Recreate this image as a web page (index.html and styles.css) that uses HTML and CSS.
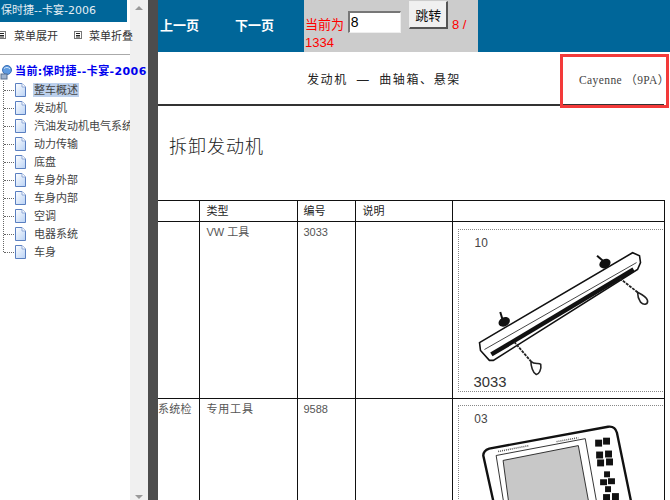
FILE: index.html
```html
<!DOCTYPE html>
<html lang="zh-CN">

<head>
  <meta charset="utf-8">
  <title>保时捷--卡宴-2006</title>
  <link rel="stylesheet" href="styles.css">
</head>

<body>
  <svg class="defs" width="0" height="0">
    <defs>
      <linearGradient id="docFill" x1="0" y1="0" x2="1" y2="1">
        <stop offset="0" stop-color="#ffffff" />
        <stop offset="1" stop-color="#b9d2f5" />
      </linearGradient>
      <symbol id="doc" viewBox="0 0 12 14">
        <path d="M1.5 .5H8L11.5 4V13.5H1.5Z" fill="url(#docFill)" stroke="#5a7fc0" />
        <path d="M8 .5V4H11.5" fill="#fff" stroke="#8fa9d8" />
      </symbol>
      <symbol id="menuIcon" viewBox="0 0 8 8">
        <rect x=".5" y=".5" width="7" height="7" fill="#fff" stroke="#777" />
        <path d="M2 2.5H6M2 4.5H6M2 6H6" stroke="#222" />
      </symbol>
    </defs>
  </svg>

  <div class="page">
    <div class="side">
      <div class="side-title">保时捷--卡宴-2006</div>
      <div class="menu-bar">
        <span class="menu-item"><svg class="menu-icon"><use href="#menuIcon" /></svg>菜单展开</span>
        <span class="menu-item"><svg class="menu-icon"><use href="#menuIcon" /></svg>菜单折叠</span>
      </div>
      <div class="tree-root">
        <svg class="root-icon" viewBox="0 0 12 15">
          <circle cx="7" cy="5" r="4.5" fill="#5f9be0" stroke="#3b6fb5" />
          <path d="M4 3.5C6 2 8 2 10 4" stroke="#d5e8fb" fill="none" />
          <rect x="1" y="9" width="6" height="5" fill="#9fb4cf" stroke="#58708f" />
        </svg>
        <span>当前:保时捷--卡宴-2006</span>
      </div>
      <ul class="tree">
        <li class="tree-row"><i class="dash"></i><svg class="doc"><use href="#doc" /></svg><span class="tree-label on">整车概述</span></li>
        <li class="tree-row"><i class="dash"></i><svg class="doc"><use href="#doc" /></svg><span class="tree-label">发动机</span></li>
        <li class="tree-row"><i class="dash"></i><svg class="doc"><use href="#doc" /></svg><span class="tree-label">汽油发动机电气系统</span></li>
        <li class="tree-row"><i class="dash"></i><svg class="doc"><use href="#doc" /></svg><span class="tree-label">动力传输</span></li>
        <li class="tree-row"><i class="dash"></i><svg class="doc"><use href="#doc" /></svg><span class="tree-label">底盘</span></li>
        <li class="tree-row"><i class="dash"></i><svg class="doc"><use href="#doc" /></svg><span class="tree-label">车身外部</span></li>
        <li class="tree-row"><i class="dash"></i><svg class="doc"><use href="#doc" /></svg><span class="tree-label">车身内部</span></li>
        <li class="tree-row"><i class="dash"></i><svg class="doc"><use href="#doc" /></svg><span class="tree-label">空调</span></li>
        <li class="tree-row"><i class="dash"></i><svg class="doc"><use href="#doc" /></svg><span class="tree-label">电器系统</span></li>
        <li class="tree-row"><i class="dash"></i><svg class="doc"><use href="#doc" /></svg><span class="tree-label">车身</span></li>
      </ul>
    </div>

    <div class="scrollbar">
      <i class="arrow-up"></i>
      <i class="arrow-down"></i>
    </div>
    <div class="divider"></div>

    <div class="main">
      <div class="nav">
        <a class="nav-link">上一页</a>
        <a class="nav-link">下一页</a>
        <div class="jump">
          <span>当前为</span>
          <input class="jump-input" type="text" value="8">
          <button class="jump-btn">跳转</button>
          <span>8 / 1334</span>
        </div>
      </div>

      <div class="doc-head">
        <span class="doc-section">发动机 — 曲轴箱、悬架</span>
        <span class="doc-model">Cayenne （9PA）</span>
      </div>
      <div class="red-mark"></div>

      <h1 class="doc-title">拆卸发动机</h1>

      <table class="parts">
        <colgroup>
          <col class="c-name">
          <col class="c-type">
          <col class="c-no">
          <col class="c-note">
          <col class="c-pic">
        </colgroup>
        <tr class="head-row">
          <th></th>
          <th>类型</th>
          <th>编号</th>
          <th>说明</th>
          <th></th>
        </tr>
        <tr class="row-one">
          <td></td>
          <td>VW 工具</td>
          <td>3033</td>
          <td></td>
          <td class="pic-cell">
            <svg class="pic pic-one" viewBox="0 0 205 163">
              <text x="15" y="17" class="pic-no">10</text>
              <path d="M41 83L44 93" stroke="#111" stroke-width="2" />
              <path d="M139 26L147 33" stroke="#111" stroke-width="2" />
              <ellipse cx="45" cy="93" rx="6" ry="4.5" fill="#111" transform="rotate(-28 45 93)" />
              <ellipse cx="147" cy="34" rx="6" ry="4.5" fill="#111" transform="rotate(-28 147 34)" />
              <path d="M20 114L175 23L182 26L183 33L180 40L34 132L30 132L21 122Z" fill="#fff" stroke="#111" stroke-width="1.6" />
              <path d="M25 121L179 33" stroke="#444" stroke-width="1" />
              <path d="M32 126L176 40" stroke="#111" stroke-width="4.5" />
              <path d="M55 113L72 133" stroke="#222" stroke-width="1.8" stroke-dasharray="3 1" />
              <path d="M72 133C76 137 80 134 82 136C83 141 80 147 77 146C74 144 72 138 72 133Z" fill="none" stroke="#222" stroke-width="1.6" />
              <path d="M162 49L180 63" stroke="#222" stroke-width="1.8" stroke-dasharray="3 1" />
              <path d="M180 63C184 65 189 68 190 71C191 75 187 77 183 73C181 70 180 66 180 63Z" fill="none" stroke="#222" stroke-width="1.6" />
              <text x="14" y="159" class="pic-code">3033</text>
            </svg>
          </td>
        </tr>
        <tr class="row-two">
          <td class="name-cut">系统检</td>
          <td>专用工具</td>
          <td>9588</td>
          <td></td>
          <td class="pic-cell">
            <svg class="pic pic-two" viewBox="0 0 205 100">
              <text x="15" y="17" class="pic-no">03</text>
              <path d="M24 50Q24 45 30 43L150 21Q157 20 159 27L174 100H35Z" fill="#fff" stroke="#111" stroke-width="2.4" />
              <path d="M37 50L127 33L139 100H45Z" fill="#fff" stroke="#333" />
              <path d="M44 55L120 40L131 100H50Z" fill="#c8c8c8" stroke="#333" />
              <path d="M39 46L70 40M98 36L120 32" stroke="#555" stroke-width="1.5" stroke-dasharray="1 1" />
              <g fill="#111">
                <rect x="137" y="34" width="7" height="7" /><rect x="145" y="32" width="7" height="7" />
                <rect x="138" y="46" width="7" height="7" /><rect x="147" y="45" width="7" height="7" />
                <rect x="139" y="54" width="7" height="7" /><rect x="148" y="53" width="7" height="7" />
                <rect x="146" y="66" width="6" height="6" /><rect x="142" y="74" width="7" height="6" /><rect x="150" y="73" width="7" height="6" />
                <rect x="147" y="81" width="6" height="6" /><rect x="145" y="89" width="7" height="7" /><rect x="154" y="88" width="7" height="7" />
              </g>
            </svg>
          </td>
        </tr>
      </table>
    </div>
  </div>
</body>

</html>
```

FILE: styles.css
```css
html, body {
  margin: 0;
  padding: 0;
  height: 500px;
  overflow: hidden;
  background: #fff;
}

.defs {
  display: block;
  height: 0;
}

.page {
  display: flex;
  height: 500px;
  overflow: hidden;
  font-family: "Liberation Sans", "Noto Sans CJK SC", sans-serif;
}

/* left tree */
.side {
  width: 130px;
  flex: none;
  position: relative;
  z-index: 1;
}

.side-title {
  width: 127px;
  height: 22px;
  padding-left: 1px;
  box-sizing: border-box;
  background: #006699;
  color: #e4eef4;
  font: 11px/22px "DejaVu Sans", "Noto Sans CJK SC", sans-serif;
}

.menu-bar {
  display: flex;
  height: 33px;
  box-sizing: border-box;
  padding-bottom: 6px;
  align-items: center;
  border-bottom: 1px solid #aaa;
  font-size: 11px;
  color: #333;
}

.menu-item {
  display: flex;
  align-items: center;
  flex: none;
  width: 73px;
  white-space: nowrap;
}

.menu-item:first-child {
  width: 74px;
}

.menu-icon {
  width: 8px;
  height: 8px;
  margin-right: 7px;
}

.menu-item:first-child .menu-icon {
  margin-left: -2px;
  margin-right: 8px;
}

.tree-root {
  display: flex;
  align-items: center;
  height: 18px;
  margin-top: 8px;
  color: #0000ee;
  font: bold 11px/18px "DejaVu Sans", "Noto Sans CJK SC", sans-serif;
  letter-spacing: .4px;
  white-space: nowrap;
}

.root-icon {
  width: 12px;
  height: 15px;
  margin-right: 3px;
  flex: none;
}

.tree {
  list-style: none;
  margin: 0 0 0 3px;
  padding: 0;
  height: 171px;
  border-left: 1px dotted #666;
}

.tree-row {
  display: flex;
  align-items: center;
  height: 18px;
  width: 126px;
  overflow: hidden;
  font-size: 11px;
  color: #444;
  white-space: nowrap;
}

.dash {
  width: 10px;
  flex: none;
  border-top: 1px dotted #666;
}

.doc {
  width: 12px;
  height: 14px;
  flex: none;
  margin-right: 8px;
}

.tree-label {
  line-height: 14px;
  padding: 0 1px;
  margin-left: -1px;
}

.tree-label.on {
  background: #bcd0ec;
}

/* scrollbar and splitter */
.scrollbar {
  width: 18px;
  flex: none;
  background: #f0f0f0;
  display: flex;
  flex-direction: column;
  justify-content: space-between;
  align-items: center;
  padding: 6px 0 1px;
  box-sizing: border-box;
}

.arrow-up {
  border: 4px solid transparent;
  border-top: 0;
  border-bottom: 4px solid #9a9a9a;
}

.arrow-down {
  border: 4px solid transparent;
  border-bottom: 0;
  border-top: 4px solid #9a9a9a;
}

.divider {
  width: 10px;
  flex: none;
  background: #4d4d4d;
}

/* main */
.main {
  flex: 1;
  min-width: 0;
  position: relative;
}

.nav {
  display: flex;
  height: 52px;
  background: #006699;
}

.nav-link {
  width: 75px;
  padding: 17px 0 0 2px;
  box-sizing: border-box;
  color: #fff;
  font-size: 13px;
  line-height: 18px;
  font-weight: bold;
}

.nav-link:nth-child(2) {
  width: 71px;
}

.jump {
  width: 174px;
  height: 52px;
  box-sizing: border-box;
  padding-left: 1px;
  background: #cccccc;
  color: #ff0000;
  font-size: 13px;
  line-height: 16px;
  overflow: hidden;
}

.jump-input {
  width: 53px;
  height: 22px;
  box-sizing: border-box;
  margin: 0 0 2px;
  padding: 0 1px;
  border: 1px solid;
  border-width: 2px 1px 1px 2px;
  border-color: #777 #eee #eee #777;
  font: 14px "Liberation Sans", sans-serif;
  vertical-align: 2px;
}

.jump-btn {
  width: 39px;
  height: 28px;
  margin: 1px 0 0 5px;
  padding: 0;
  border: 1px solid;
  border-width: 1px 2px 2px 1px;
  border-color: #eee #555 #555 #eee;
  background: #f0f0f0;
  color: #111;
  font: 13px "Liberation Sans", "Noto Sans CJK SC", sans-serif;
  vertical-align: 9px;
}

.doc-head {
  display: flex;
  align-items: center;
  height: 51px;
  width: 357px;
  margin-top: 1px;
  border-bottom: 2px solid #333;
  padding-left: 149px;
}

.doc-section {
  width: 272px;
  flex: none;
  font-size: 12px;
  letter-spacing: 1.6px;
  word-spacing: 4px;
  color: #222;
  white-space: nowrap;
}

.doc-model {
  font: 11.5px "Liberation Serif", "Noto Sans CJK SC", serif;
  letter-spacing: .4px;
  color: #444;
  white-space: nowrap;
}

/* the box someone drew on the screenshot */
.red-mark {
  position: absolute;
  left: 402px;
  top: 54px;
  width: 109px;
  height: 54px;
  box-sizing: border-box;
  border: 3px solid #f33a3a;
}

.doc-title {
  margin: 28px 0 0 11px;
  height: 66px;
  font-size: 18px;
  line-height: 26px;
  font-weight: 300;
  letter-spacing: 1px;
  color: #222;
}

.parts {
  width: 506px;
  table-layout: fixed;
  border-collapse: collapse;
  font-size: 11px;
  color: #555;
}

.c-name { width: 41px; }
.c-type { width: 98px; }
.c-no { width: 58px; }
.c-note { width: 97px; }
.c-pic { width: 212px; }

.parts th,
.parts td {
  border: 1px solid #111;
  padding: 4px 0 0 7px;
  vertical-align: top;
  text-align: left;
  font-weight: normal;
  line-height: 13px;
}

.parts th:nth-child(3),
.parts td:nth-child(3) {
  padding-left: 6px;
}

.parts th:first-child,
.parts td:first-child {
  border-left: 0;
}

.parts th {
  color: #222;
  height: 16px;
}

.row-one td {
  height: 169px;
}

.row-two td {
  height: 120px;
}

.parts .name-cut {
  padding-left: 0;
  letter-spacing: .2px;
}

.row-two td:nth-child(2) {
  letter-spacing: .8px;
}

.parts .pic-cell {
  padding: 6px 0 0 5px;
}

.row-one .pic-cell {
  padding-top: 7px;
}

.pic {
  display: block;
  width: 205px;
  box-sizing: border-box;
  border: 1px dotted #888;
  border-right: 0;
}

.pic-one {
  height: 163px;
}

.pic-two {
  height: 100px;
  border-bottom: 0;
}

.pic-no {
  font: 12px "Liberation Sans", sans-serif;
  fill: #444;
}

.pic-code {
  font: 15px "Liberation Sans", sans-serif;
  fill: #333;
}
```
